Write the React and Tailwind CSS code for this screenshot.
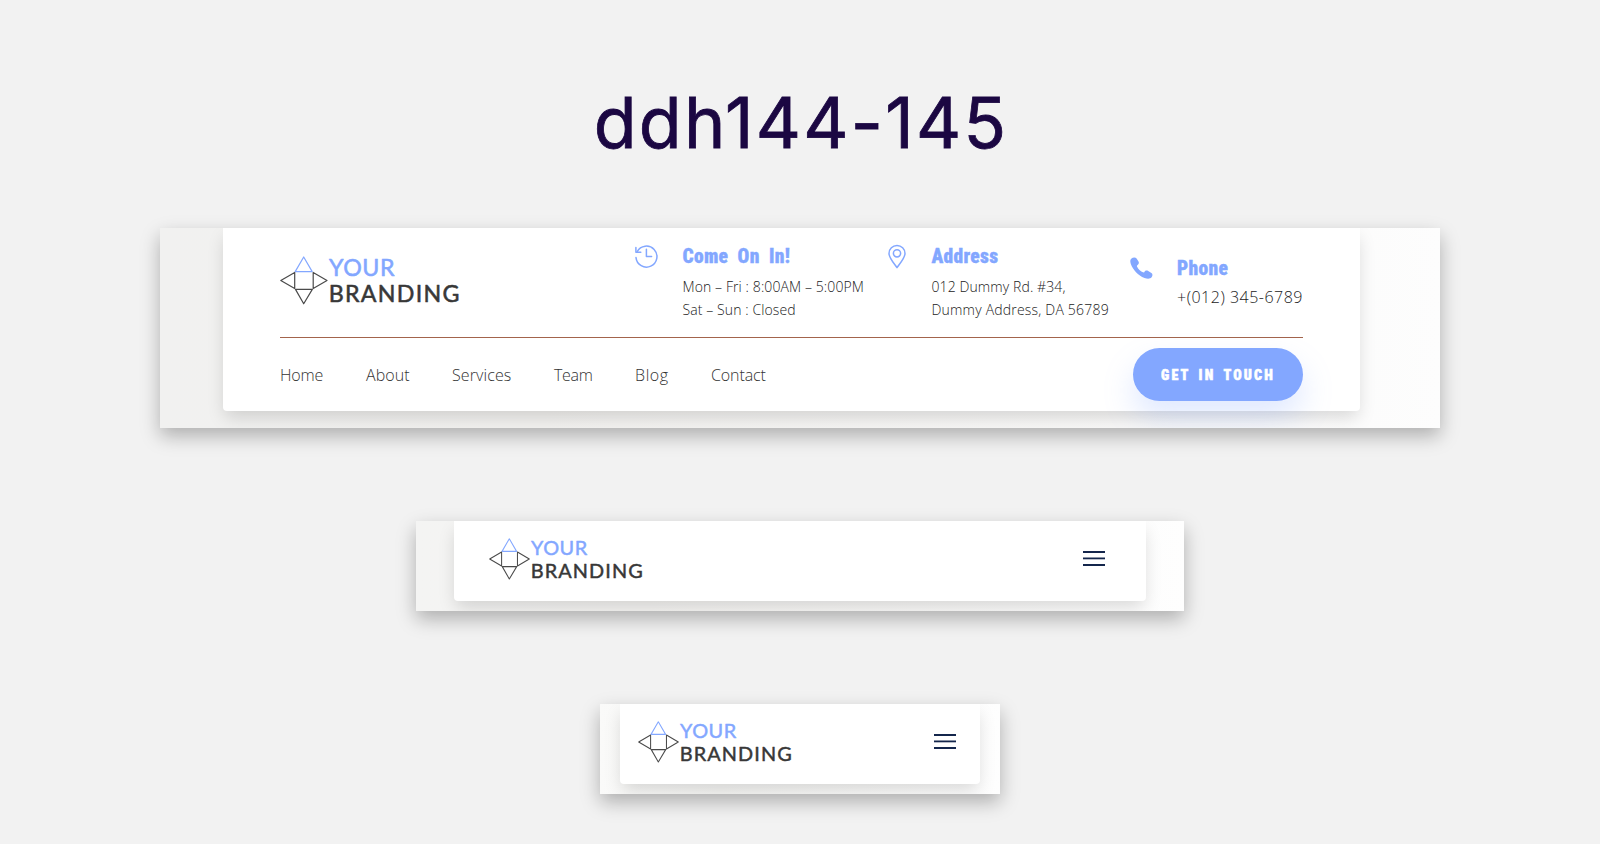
const PANEL = 'flex overflow-hidden shadow-[0_8px_18px_rgba(0,0,0,0.28)]';
const CARD = 'bg-white rounded-b-[4px] shadow-[0_8px_18px_-2px_rgba(0,0,0,0.15)]';

function Logo({ className }) {
  return (
    <svg viewBox="0 0 182 49" className={`overflow-visible ${className}`} fill="none" strokeWidth="1.2" strokeLinejoin="round">
      <path d="M23.7 1 32.2 15.6H15.2Z" stroke="#83a7ff" />
      <path d="M.8 24.5 14.7 16.4V32.6ZM33.2 16.4 47 24.5 33.2 32.6ZM15.5 33.4H32.3L23.7 47.8Z" stroke="#4a4a4a" />
      <g fontFamily="Lato, sans-serif" fontWeight="400" fontSize="23.2" strokeWidth="0.55">
        <text x="49" y="19.7" textLength="65.5" fill="#83a7ff" stroke="#83a7ff">YOUR</text>
        <text x="48.8" y="46.3" textLength="130.6" fill="#383838" stroke="#383838">BRANDING</text>
      </g>
    </svg>
  );
}

function HistoryIcon() {
  return (
    <svg viewBox="0 0 24 24" className="size-6 shrink-0" fill="none" stroke="#83a7ff" strokeWidth="1.5" strokeLinecap="round" strokeLinejoin="round">
      <path d="M2.2 7.6A10.5 10.5 0 1 1 1 13.6" />
      <path d="M.9 3.6V8.2H5.8" />
      <path d="M11.4 5.2V12.4H16.6" />
    </svg>
  );
}

function PinIcon() {
  return (
    <svg viewBox="0 0 18 24" className="ml-[-0.5px] h-[25px] w-[18px] shrink-0" fill="none" stroke="#83a7ff" strokeWidth="1.5" strokeLinejoin="round">
      <path d="M9 23.2C6.8 19.8 1 13.6 1 8.9A8 8 0 0 1 17 8.9C17 13.6 11.2 19.8 9 23.2Z" />
      <circle cx="9" cy="8.8" r="3.6" />
    </svg>
  );
}

function PhoneIcon() {
  return (
    <svg viewBox="0 0 23 22" className="h-[22px] w-[23px] shrink-0" fill="#83a7ff">
      <path d="M1.2 1.8C3 .2 5.5 .1 6.6 1.6L8.5 4.6C9.3 6 8.8 7.2 7.4 8.2C6.8 8.7 6.8 9 7.1 9.7C8.5 12.4 10.8 14.4 13 15.3C13.8 15.6 14 15.5 14.4 14.9C15.3 13.4 16.8 13.2 18.2 14L21.4 15.9C22.8 16.9 22.8 18.6 21.6 20.2C20 22 17.6 22 14.5 20.9C8 18.3 3 12.7 .8 6.9C.1 4.8 0 3 1.2 1.8Z" />
    </svg>
  );
}

function MenuIcon() {
  return (
    <svg viewBox="0 0 22 15" className="h-[15px] w-[22px]" fill="#14264c">
      <rect y="0" width="22" height="2" />
      <rect y="6.5" width="22" height="1.8" />
      <rect y="13" width="22" height="2" />
    </svg>
  );
}

function Heading({ children }) {
  return (
    <h2 className="font-['Roboto_Condensed','Roboto',sans-serif] text-[19.5px] leading-[22px] font-black tracking-[0.3px] text-[#83a7ff] [word-spacing:4.5px] [-webkit-text-stroke:0.3px_#83a7ff]">
      {children}
    </h2>
  );
}

const nav = [
  ['Home', 'w-[86px] tracking-[-0.15px]'],
  ['About', 'w-[86px] tracking-[0.1px]'],
  ['Services', 'w-[102px] tracking-[0.1px]'],
  ['Team', 'w-[81px] tracking-[-0.3px]'],
  ['Blog', 'w-[76px] tracking-[0.6px]'],
  ['Contact', 'w-[60px] tracking-[-0.1px]'],
];

export default function App() {
  return (
    <div className="flex h-[844px] w-full flex-col items-center overflow-hidden bg-[#f2f2f2] font-['Open_Sans','Noto_Sans',sans-serif] font-[350] whitespace-nowrap text-[#222]">
      <h1 className="h-[228px] shrink-0 pt-[80px] pl-0.5 font-['Inter',sans-serif] text-[70px] leading-[85px] font-normal tracking-[2.3px] text-[#1b0742] [-webkit-text-stroke:0.8px_#1b0742]">
        ddh144-145
      </h1>

      <section className={`${PANEL} h-[200px] w-[1280px] shrink-0 bg-linear-to-r from-[#f1f1f0] via-[#f2f1ef] via-30% to-[#fdfdfd] pl-[63px]`}>
        <div className={`${CARD} h-[183px] w-[1137px] px-[57px]`}>
          <div className="flex h-[110px] border-b border-[#a3644c]">
            <Logo className="mt-[28px] h-[49px] w-[182px]" />
            <div className="ml-[173px] flex w-[253px] pt-4">
              <HistoryIcon />
              <div className="ml-[23.5px] pt-0.5">
                <Heading>Come On In!</Heading>
                <p className="mt-[6.5px] text-sm leading-[23px] tracking-[0.1px]">
                  Mon – Fri : 8:00AM – 5:00PM
                  <br />
                  Sat – Sun : Closed
                </p>
              </div>
            </div>
            <div className="flex w-[242px] pt-4">
              <PinIcon />
              <div className="ml-[26px] pt-0.5">
                <Heading>Address</Heading>
                <p className="mt-[6.5px] text-sm leading-[23px] tracking-[0.1px]">
                  012 Dummy Rd. #34,
                  <br />
                  <span className="tracking-[0.2px]">Dummy Address, DA 56789</span>
                </p>
              </div>
            </div>
            <div className="flex pt-[29px]">
              <PhoneIcon />
              <div className="ml-6 pt-px">
                <Heading>Phone</Heading>
                <p className="mt-[5px] text-base leading-6 tracking-[0.5px]">+(012) 345-6789</p>
              </div>
            </div>
          </div>
          <div className="flex h-[73px] items-center justify-between">
            <nav className="flex text-base text-[#333]">
              {nav.map(([label, cls]) => (
                <a key={label} className={cls}>{label}</a>
              ))}
            </nav>
            <button className="h-[53px] w-[170px] rounded-full bg-[#83a7ff] font-['Roboto_Condensed','Roboto',sans-serif] text-sm font-black tracking-[2.2px] text-white shadow-[0_16px_30px_rgba(131,167,255,0.25)] [word-spacing:3px] [-webkit-text-stroke:0.5px_white]">
              GET IN TOUCH
            </button>
          </div>
        </div>
      </section>

      <section className={`${PANEL} mt-[93px] h-[90px] w-[768px] shrink-0 bg-linear-to-r from-[#f4f4f3] via-[#f5f4f2] via-30% to-[#fefefe] pl-[38px]`}>
        <div className={`${CARD} flex h-20 w-[692px] justify-between pr-[41px] pl-[35px]`}>
          <Logo className="mt-[17px] h-[42px] w-[156px]" />
          <div className="pt-[30px]"><MenuIcon /></div>
        </div>
      </section>

      <section className={`${PANEL} mt-[93px] h-[90px] w-[400px] shrink-0 bg-linear-to-r from-[#fafaf9] via-[#f6f6f4] via-30% to-[#fefefe] pl-5`}>
        <div className={`${CARD} flex h-20 w-[360px] justify-between pr-[24px] pl-[18px]`}>
          <Logo className="mt-[17px] h-[42px] w-[156px]" />
          <div className="pt-[30px]"><MenuIcon /></div>
        </div>
      </section>
    </div>
  );
}
